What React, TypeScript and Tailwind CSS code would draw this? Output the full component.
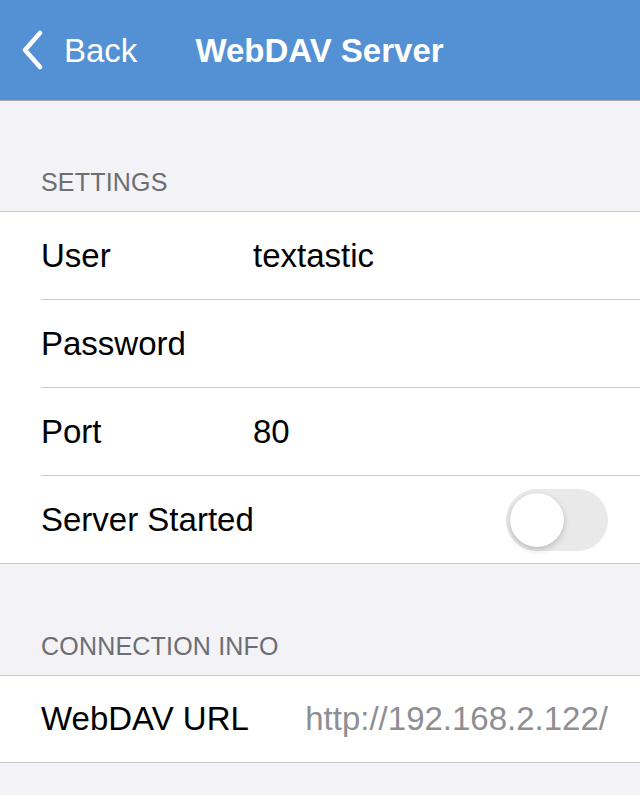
import type { ReactNode } from 'react';

const FONT = '[font-family:"Liberation_Sans",Arial,sans-serif]';

function SectionHeader({ title, tall }: { title: string; tall?: boolean }) {
  return (
    <div
      className={`${tall ? 'h-[111px]' : 'h-[110px]'} flex items-end pb-[16px] pl-[41px] text-[25px] leading-none text-[#6d6d72] tracking-[0.2px]`}
    >
      {title}
    </div>
  );
}

function Row({ label, last, children }: { label: string; last?: boolean; children?: ReactNode }) {
  return (
    <div className="pl-[41px]">
      <div
        className={`flex items-center pr-[32px] ${last ? 'h-[87px]' : 'h-[88px] border-b border-[#c8c7cc]'}`}
      >
        <span className="min-w-[212px] shrink-0 whitespace-nowrap text-[33px] text-black">{label}</span>
        <div className="flex-1 flex items-center text-[33px] text-black">{children}</div>
      </div>
    </div>
  );
}

function Toggle() {
  return (
    <div className="ml-auto w-[102px] h-[62px] rounded-full bg-[#e9e9ea] p-[4px] flex items-center">
      <div className="w-[54px] h-[54px] rounded-full bg-white shadow-[0_3px_6px_rgba(0,0,0,0.18),0_0_1px_rgba(0,0,0,0.12)]" />
    </div>
  );
}

export default function App() {
  return (
    <div className={`w-[640px] h-[795px] bg-[#f2f2f7] overflow-hidden ${FONT}`}>
      {/* Nav bar */}
      <div className="h-[101px] bg-[#5490d4] border-b border-[#a9a9ad] flex items-center text-white">
        <div className="flex items-center pl-[22px]">
          <svg width="22" height="40" viewBox="0 0 22 40" fill="none">
            <path d="M18 3 L3 20 L18 37" stroke="white" strokeWidth="4.5" strokeLinecap="round" strokeLinejoin="round" />
          </svg>
          <span className="ml-[20px] text-[33px] leading-none">Back</span>
        </div>
        <span className="ml-[58px] text-[33px] font-bold leading-none">WebDAV Server</span>
      </div>

      <SectionHeader title="SETTINGS" />
      <div className="bg-white border-y border-[#c8c7cc]">
        <Row label="User">textastic</Row>
        <Row label="Password" />
        <Row label="Port">80</Row>
        <Row label="Server Started" last>
          <Toggle />
        </Row>
      </div>

      <SectionHeader title="CONNECTION INFO" tall />
      <div className="bg-white border-y border-[#c8c7cc] pl-[41px]">
        <div className="h-[86px] flex items-center pr-[32px]">
          <span className="whitespace-nowrap text-[33px] text-black">WebDAV URL</span>
          <span className="ml-auto whitespace-nowrap text-[33px] text-[#8e8e93]">http://192.168.2.122/</span>
        </div>
      </div>
    </div>
  );
}
